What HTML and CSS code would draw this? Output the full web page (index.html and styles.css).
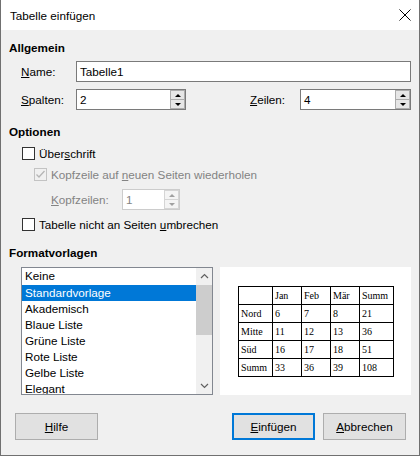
FILE: index.html
```html
<!DOCTYPE html>
<html lang="de">
<head>
<meta charset="utf-8">
<title>Tabelle einfügen</title>
<link rel="stylesheet" href="styles.css">
</head>
<body>
<div class="window">
  <div class="titlebar">
    <span class="title">Tabelle einfügen</span>
    <svg class="close" width="12" height="12" viewBox="0 0 12 12"><path d="M0.5 0.5 L11.5 11.5 M11.5 0.5 L0.5 11.5" stroke="#000" stroke-width="1" fill="none"/></svg>
  </div>
  <div class="content">
    <div class="heading h-allg">Allgemein</div>
    <div class="row row-name">
      <span class="lbl"><u>N</u>ame:</span>
      <div class="input input-name">Tabelle1</div>
    </div>
    <div class="row row-spin">
      <span class="lbl"><u>S</u>palten:</span>
      <div class="input spin spin-cols">
        <span class="val">2</span>
        <span class="spinbtns"><span class="sb sb-up"></span><span class="sb sb-down"></span></span>
      </div>
      <span class="lbl lbl-rows"><u>Z</u>eilen:</span>
      <div class="input spin spin-rows">
        <span class="val">4</span>
        <span class="spinbtns"><span class="sb sb-up"></span><span class="sb sb-down"></span></span>
      </div>
    </div>

    <div class="heading h-opt">Optionen</div>
    <div class="check row-ueber">
      <span class="box"></span><span class="ctext">Über<u>s</u>chrift</span>
    </div>
    <div class="check row-kopf disabled">
      <span class="box box-dis"><svg width="11" height="11" viewBox="0 0 11 11"><path d="M1.5 5.5 L4 8 L9.5 2" stroke="#b5b5b5" stroke-width="1.3" fill="none"/></svg></span><span class="ctext">Kopfzeile auf <u>n</u>euen Seiten wiederholen</span>
    </div>
    <div class="row row-kopfz disabled">
      <span class="lbl lbl-kopfz"><u>K</u>opfzeilen:</span>
      <div class="input spin spin-kopfz">
        <span class="val">1</span>
        <span class="spinbtns"><span class="sb sb-up"></span><span class="sb sb-down"></span></span>
      </div>
    </div>
    <div class="check row-umbr">
      <span class="box"></span><span class="ctext">Tabelle nicht an Seiten <u>u</u>mbrechen</span>
    </div>

    <div class="heading h-fmt">Formatvorlagen</div>
    <div class="fmt-area">
      <div class="listbox">
        <ul class="items">
          <li>Keine</li>
          <li class="sel">Standardvorlage</li>
          <li>Akademisch</li>
          <li>Blaue Liste</li>
          <li>Grüne Liste</li>
          <li>Rote Liste</li>
          <li>Gelbe Liste</li>
          <li>Elegant</li>
        </ul>
        <div class="vscroll">
          <svg class="arr" width="9" height="6" viewBox="0 0 9 6"><path d="M1 5 L4.5 1.5 L8 5" stroke="#606060" stroke-width="1.2" fill="none"/></svg>
          <div class="track"><div class="thumb"></div></div>
          <svg class="arr" width="9" height="6" viewBox="0 0 9 6"><path d="M1 1 L4.5 4.5 L8 1" stroke="#606060" stroke-width="1.2" fill="none"/></svg>
        </div>
      </div>
      <div class="preview">
        <table class="ptable">
          <tr><td></td><td>Jan</td><td>Feb</td><td>Mär</td><td>Summ</td></tr>
          <tr><td>Nord</td><td>6</td><td>7</td><td>8</td><td>21</td></tr>
          <tr><td>Mitte</td><td>11</td><td>12</td><td>13</td><td>36</td></tr>
          <tr><td>Süd</td><td>16</td><td>17</td><td>18</td><td>51</td></tr>
          <tr><td>Summ</td><td>33</td><td>36</td><td>39</td><td>108</td></tr>
        </table>
      </div>
    </div>

    <div class="buttons">
      <button class="btn btn-help"><u>H</u>ilfe</button>
      <span class="spacer"></span>
      <button class="btn btn-default"><u>E</u>infügen</button>
      <button class="btn btn-cancel"><u>A</u>bbrechen</button>
    </div>
  </div>
</div>
</body>
</html>
```

FILE: styles.css
```css
html, body {
  margin: 0;
  padding: 0;
}
body {
  width: 420px;
  height: 456px;
  font-family: "Liberation Sans", Arial, sans-serif;
  font-size: 11.7px;
  color: #000;
  overflow: hidden;
}
.window {
  box-sizing: border-box;
  width: 420px;
  height: 456px;
  border: 1px solid #707070;
  border-top: none;
  background: #f0f0f0;
  display: flex;
  flex-direction: column;
}
.titlebar {
  height: 30px;
  flex: none;
  background: #fff;
  display: flex;
  align-items: center;
  padding-left: 9px;
  padding-right: 8px;
}
.title {
  padding-top: 1px;
}
.close {
  margin-left: auto;
}
.content {
  flex: 1;
  padding: 0 8px;
  display: flex;
  flex-direction: column;
}
.heading {
  font-weight: bold;
  height: 16px;
  line-height: 16px;
}
.h-allg { margin-top: 10px; }
.h-opt { margin-top: 14px; }
.h-fmt { margin-top: 12px; }

.row {
  display: flex;
  align-items: center;
  height: 21px;
}
.row-name { margin-top: 5px; padding-left: 12px; }
.row-spin { margin-top: 7px; padding-left: 12px; }
.lbl {
  width: 55px;
  flex: none;
}
.lbl-rows {
  margin-left: 64px;
  width: 50px;
}
.input {
  box-sizing: border-box;
  height: 21px;
  background: #fff;
  border: 1px solid #7a7a7a;
  display: flex;
  align-items: center;
  padding-left: 3px;
}
.input-name {
  flex: 1;
}
.spin {
  justify-content: space-between;
  padding-right: 0;
}
.spin-cols { width: 110px; }
.spin-rows { width: 111px; }
.spinbtns {
  display: flex;
  flex-direction: column;
  width: 15px;
  height: 19px;
  border-left: 1px solid #fff;
}
.sb {
  box-sizing: border-box;
  flex: 1;
  background: #e6e6e6;
  border: 1px solid #acacac;
  display: flex;
  align-items: center;
  justify-content: center;
}
.sb-up { border-bottom: none; }
.sb-up::after {
  content: "";
  border-left: 3px solid transparent;
  border-right: 3px solid transparent;
  border-bottom: 3px solid #000;
}
.sb-down::after {
  content: "";
  border-left: 3px solid transparent;
  border-right: 3px solid transparent;
  border-top: 3px solid #000;
}

.check {
  display: flex;
  align-items: center;
  height: 17px;
}
.box {
  box-sizing: border-box;
  width: 13px;
  height: 13px;
  border: 1px solid #333;
  background: #fff;
  flex: none;
  display: flex;
  align-items: center;
  justify-content: center;
}
.box-dis {
  border-color: #c3c3c3;
  background: #f0f0f0;
}
.ctext { margin-left: 4px; }
.row-ueber { margin-top: 5px; padding-left: 13px; }
.row-kopf { margin-top: 4px; padding-left: 25px; }
.row-kopfz { margin-top: 6px; padding-left: 42px; }
.row-umbr { margin-top: 6px; padding-left: 13px; }
.disabled { color: #838383; }
.lbl-kopfz { width: 71px; }
.spin-kopfz {
  width: 58px;
  border-color: #cccccc;
}
.spin-kopfz .sb {
  background: #f4f4f4;
  border-color: #d5d5d5;
}
.spin-kopfz .sb-up::after { border-bottom-color: #a0a0a0; }
.spin-kopfz .sb-down::after { border-top-color: #a0a0a0; }

.fmt-area {
  margin-top: 6px;
  display: flex;
  height: 128px;
  padding-left: 12px;
}
.listbox {
  box-sizing: border-box;
  width: 192px;
  height: 128px;
  border: 1px solid #828790;
  background: #fff;
  display: flex;
  overflow: hidden;
}
.items {
  list-style: none;
  margin: 0;
  padding: 0;
  flex: 1;
}
.items li {
  height: 16px;
  line-height: 16px;
  padding-left: 3px;
  white-space: nowrap;
}
.items li:first-child {
  height: 17px;
}
.items li.sel {
  background: #0078d7;
  color: #fff;
}
.vscroll {
  width: 16px;
  flex: none;
  background: #f0f0f0;
  display: flex;
  flex-direction: column;
  align-items: center;
}
.arr {
  flex: none;
  margin: 5px 0;
}
.track {
  flex: 1;
  width: 100%;
  padding-top: 1px;
}
.thumb {
  width: 16px;
  height: 50px;
  background: #cdcdcd;
}
.preview {
  margin-left: 7px;
  width: 191px;
  height: 128px;
  background: #fff;
  display: flex;
  align-items: flex-start;
  padding-left: 18px;
  padding-top: 19px;
  box-sizing: border-box;
}
.ptable {
  border-collapse: collapse;
  font-family: "Liberation Serif", "Times New Roman", serif;
  font-size: 10px;
}
.ptable td {
  border: 1px solid #000;
  height: 18px;
  padding: 0 2px;
  text-align: left;
  vertical-align: middle;
  box-sizing: border-box;
}
.ptable td:nth-child(1) { width: 34px; }
.ptable td:nth-child(2) { width: 29px; }
.ptable td:nth-child(3) { width: 29px; }
.ptable td:nth-child(4) { width: 29px; }
.ptable td:nth-child(5) { width: 34px; }

.buttons {
  margin-top: 18px;
  display: flex;
  padding-left: 6px;
  padding-right: 5px;
}
.spacer { flex: 1; }
.btn {
  box-sizing: border-box;
  height: 27px;
  width: 83px;
  background: #e1e1e1;
  border: 1px solid #adadad;
  font-family: inherit;
  font-size: 11.7px;
  color: #000;
  padding: 0;
}
.btn-default {
  border: 2px solid #0078d7;
}
.btn-cancel {
  margin-left: 8px;
}
```
